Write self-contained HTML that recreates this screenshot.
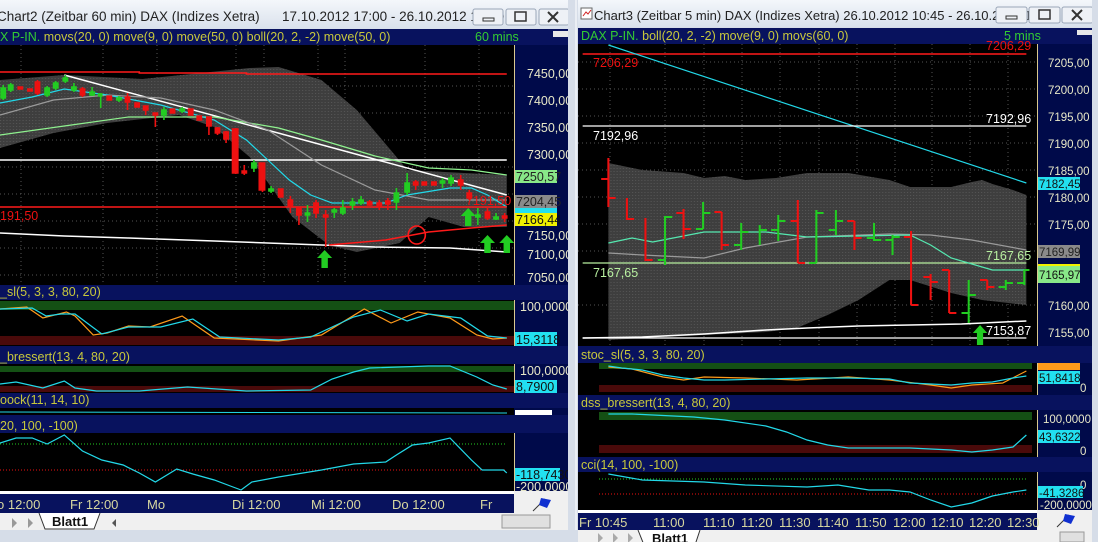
<!DOCTYPE html>
<html><head><meta charset="utf-8"><style>
html,body{margin:0;padding:0;background:#d4dbe6;}
svg{display:block;font-family:"Liberation Sans",Arial,sans-serif;}
</style></head><body>
<svg width="1098" height="542" viewBox="0 0 1098 542" xmlns="http://www.w3.org/2000/svg">
<defs>
<linearGradient id="tb" x1="0" y1="0" x2="0" y2="1"><stop offset="0" stop-color="#f4f7fb"/><stop offset="1" stop-color="#d9e1ec"/></linearGradient>
<pattern id="dot" width="3" height="3" patternUnits="userSpaceOnUse"><rect width="3" height="3" fill="#3e3e3e"/><rect width="1" height="1" fill="#565656"/></pattern>
</defs>
<rect width="1098" height="542" fill="#d6dde8"/>

<!-- ============ LEFT WINDOW ============ -->
<rect x="0" y="0" width="568" height="29" fill="url(#tb)"/>
<text x="-3" y="21" font-size="13.5" fill="#222">Chart2 (Zeitbar 60 min)  DAX (Indizes Xetra)</text>
<text x="282" y="21" font-size="13.5" fill="#222">17.10.2012 17:00 - 26.10.2012 12:00</text>
<g fill="#eef1f6" stroke="#9aa6b8"><rect x="473" y="9" width="30" height="16" rx="2"/><rect x="506" y="9" width="30" height="16" rx="2"/><rect x="539" y="9" width="30" height="16" rx="2"/></g>
<rect x="483" y="18" width="11" height="3" fill="none" stroke="#333"/><rect x="515" y="12" width="11" height="9" fill="none" stroke="#333" stroke-width="1.5"/>
<path d="M548 12 l10 10 M558 12 l-10 10" stroke="#333" stroke-width="2"/>

<rect x="0" y="29" width="568" height="16" fill="#08125e"/>
<text x="0" y="41" font-size="12.5"><tspan fill="#33cc33">X P-IN.</tspan><tspan fill="#c8c83c"> movs(20, 0) move(9, 0) move(50, 0) boll(20, 2, -2) move(50, 0)</tspan></text>
<text x="475" y="41" font-size="12.5" fill="#33cc33">60 mins</text>
<rect x="553" y="31" width="15" height="6" fill="#e8e8e8"/>

<rect x="0" y="45" width="514" height="240" fill="#000"/>
<rect x="514" y="45" width="54" height="240" fill="#000a4a"/>
<line x1="514.5" y1="45" x2="514.5" y2="285" stroke="#d8c890"/>
<g stroke="#555" stroke-dasharray="1,3">
<line x1="0" y1="86" x2="514" y2="86"/><line x1="0" y1="113" x2="514" y2="113"/><line x1="0" y1="140" x2="514" y2="140"/><line x1="0" y1="167" x2="514" y2="167"/><line x1="0" y1="194" x2="514" y2="194"/><line x1="0" y1="221" x2="514" y2="221"/><line x1="0" y1="248" x2="514" y2="248"/><line x1="0" y1="275" x2="514" y2="275"/>
<line x1="21" y1="45" x2="21" y2="285"/><line x1="103" y1="45" x2="103" y2="285"/><line x1="157" y1="45" x2="157" y2="285"/><line x1="236" y1="45" x2="236" y2="285"/><line x1="264" y1="45" x2="264" y2="285"/><line x1="318" y1="45" x2="318" y2="285"/><line x1="345" y1="45" x2="345" y2="285"/><line x1="425" y1="45" x2="425" y2="285"/><line x1="479" y1="45" x2="479" y2="285"/>
</g>
<g transform="scale(1.0714,1)">
<polygon fill="url(#dot)" points="0,80 60,75 133,79 233,68 260,67 300,80 333,110 367,153 380,170 433,173 473,175 473,227 433,227 400,217 373,243 333,252 307,245 273,217 253,187 233,157 200,127 167,115 100,123 50,133 0,148"/>
<polyline fill="none" stroke="#ff1a1a" stroke-width="1.5" points="0,72 130,72 130,73 230,73 230,74 473,74"/>
<line x1="0" y1="160" x2="473" y2="160" stroke="#fff" stroke-width="1.5"/>
<polyline fill="none" stroke="#fff" stroke-width="1.5" points="0,233 60,236 120,238 200,241 300,245 350,247 420,248 473,252"/>
<line x1="60" y1="75" x2="473" y2="195" stroke="#fff" stroke-width="1.5"/>
<polyline fill="none" stroke="#8ff28f" stroke-width="1.2" points="0,135 60,126 120,117 200,117 260,128 300,140 350,156 400,168 440,170 473,175"/>
<polyline fill="none" stroke="#9a9a9a" stroke-width="1.2" points="0,115 50,100 100,95 150,98 200,110 250,130 300,165 350,190 400,200 473,200"/>
<polyline fill="none" stroke="#22d8e8" stroke-width="1.2" points="0,103 30,97 60,89 100,95 150,105 200,120 230,140 250,160 270,180 290,195 310,203 360,203 380,195 420,188 440,188 455,195 473,207"/>
<line x1="0" y1="207" x2="473" y2="207" stroke="#ff1a1a" stroke-width="1.5"/>
<polyline fill="none" stroke="#ff1a1a" stroke-width="1.5" points="307,245 360,240 400,232 440,228 473,225"/>
<ellipse cx="389" cy="235" rx="8" ry="9" fill="none" stroke="#ff1a1a" stroke-width="1.5"/>
<g stroke-width="1.5">
<g stroke="#22cc22" fill="#22cc22">
<line x1="3" y1="85" x2="3" y2="100"/><rect x="1" y="88" width="4" height="10"/>
<line x1="10" y1="83" x2="10" y2="92"/><rect x="8" y="85" width="4" height="5"/>
<line x1="44" y1="86" x2="44" y2="97"/><rect x="42" y="88" width="4" height="7"/>
<line x1="52" y1="81" x2="52" y2="90"/><rect x="50" y="83" width="4" height="5"/>
<line x1="61" y1="75" x2="61" y2="83"/><rect x="59" y="78" width="4" height="3"/>
<line x1="69" y1="83" x2="69" y2="92"/><rect x="67" y="87" width="4" height="3"/>
<line x1="86" y1="87" x2="86" y2="96"/><rect x="84" y="92" width="4" height="3"/>
<line x1="94" y1="93" x2="94" y2="108"/><rect x="92" y="94" width="3" height="2"/>
<line x1="111" y1="96" x2="111" y2="102"/><rect x="109" y="98" width="4" height="2"/>
<line x1="153" y1="107" x2="153" y2="120"/><rect x="151" y="110" width="4" height="5"/>
<line x1="170" y1="107" x2="170" y2="113"/><rect x="168" y="109" width="4" height="2"/>
<line x1="237" y1="160" x2="237" y2="172"/><rect x="235" y="163" width="4" height="5"/>
<line x1="253" y1="186" x2="253" y2="193"/><rect x="251" y="189" width="4" height="2"/>
<line x1="287" y1="205" x2="287" y2="222"/><rect x="285" y="213" width="4" height="2"/>
<line x1="312" y1="208" x2="312" y2="218"/><rect x="310" y="210" width="4" height="2"/>
<line x1="320" y1="200" x2="320" y2="215"/><rect x="318" y="208" width="4" height="5"/>
<line x1="329" y1="198" x2="329" y2="210"/><rect x="327" y="202" width="4" height="3"/>
<line x1="337" y1="196" x2="337" y2="205"/><rect x="335" y="200" width="4" height="3"/>
<line x1="370" y1="188" x2="370" y2="210"/><rect x="368" y="193" width="4" height="9"/>
<line x1="380" y1="173" x2="380" y2="195"/><rect x="378" y="183" width="4" height="9"/>
<line x1="413" y1="178" x2="413" y2="188"/><rect x="411" y="181" width="4" height="2"/>
<line x1="421" y1="175" x2="421" y2="186"/><rect x="419" y="178" width="4" height="5"/>
<line x1="446" y1="208" x2="446" y2="225"/><rect x="444" y="215" width="4" height="2"/>
<line x1="463" y1="213" x2="463" y2="220"/><rect x="461" y="217" width="4" height="2"/>
</g>
<g stroke="#ee1111" fill="#ee1111">
<rect x="17" y="87" width="4" height="2"/><rect x="26" y="89" width="4" height="2"/>
<line x1="35" y1="80" x2="35" y2="95"/><rect x="33" y="82" width="4" height="11"/>
<line x1="77" y1="87" x2="77" y2="97"/><rect x="75" y="89" width="4" height="6"/>
<rect x="100" y="96" width="4" height="4"/>
<line x1="119" y1="93" x2="119" y2="110"/><rect x="117" y="97" width="4" height="5"/>
<rect x="126" y="103" width="4" height="4"/>
<line x1="136" y1="106" x2="136" y2="115"/><rect x="134" y="106" width="4" height="4"/>
<line x1="145" y1="113" x2="145" y2="127"/><rect x="143" y="113" width="4" height="2"/>
<rect x="159" y="109" width="4" height="4"/>
<rect x="176" y="109" width="4" height="6"/>
<rect x="184" y="116" width="4" height="4"/>
<line x1="195" y1="117" x2="195" y2="135"/><rect x="193" y="117" width="4" height="9"/>
<line x1="203" y1="127" x2="203" y2="135"/><rect x="201" y="128" width="4" height="5"/>
<line x1="211" y1="131" x2="211" y2="143"/><rect x="209" y="132" width="4" height="7"/>
<line x1="220" y1="128" x2="220" y2="174"/><rect x="217" y="129" width="5" height="44"/>
<line x1="228" y1="165" x2="228" y2="175"/><rect x="226" y="171" width="4" height="2"/>
<line x1="245" y1="163" x2="245" y2="192"/><rect x="242" y="163" width="5" height="27"/>
<rect x="260" y="189" width="4" height="8"/>
<line x1="271" y1="196" x2="271" y2="213"/><rect x="269" y="200" width="4" height="6"/>
<line x1="279" y1="208" x2="279" y2="225"/><rect x="277" y="208" width="4" height="7"/>
<line x1="295" y1="200" x2="295" y2="218"/><rect x="293" y="203" width="4" height="10"/>
<line x1="304" y1="210" x2="304" y2="247"/><rect x="302" y="215" width="4" height="2"/>
<line x1="345" y1="200" x2="345" y2="206"/><rect x="343" y="202" width="4" height="3"/>
<line x1="354" y1="200" x2="354" y2="210"/><rect x="352" y="203" width="4" height="3"/>
<line x1="362" y1="198" x2="362" y2="210"/><rect x="360" y="201" width="4" height="3"/>
<line x1="388" y1="180" x2="388" y2="190"/><rect x="386" y="182" width="4" height="3"/>
<rect x="394" y="182" width="4" height="3"/><rect x="403" y="182" width="4" height="3"/>
<line x1="430" y1="175" x2="430" y2="190"/><rect x="428" y="180" width="4" height="5"/>
<line x1="438" y1="190" x2="438" y2="200"/><rect x="436" y="193" width="4" height="5"/>
<line x1="455" y1="208" x2="455" y2="220"/><rect x="453" y="212" width="4" height="6"/>
<line x1="471" y1="213" x2="471" y2="222"/><rect x="469" y="216" width="4" height="2"/>
</g>
</g>
<g fill="#22cc22">
<polygon points="303,250 296,258 300,258 300,268 306,268 306,258 310,258"/>
<polygon points="437,208 430,216 434,216 434,226 440,226 440,216 444,216"/>
<polygon points="455,235 448,243 452,243 452,253 458,253 458,243 462,243"/>
<polygon points="473,235 466,243 470,243 470,253 476,253 476,243 480,243"/>
</g>
</g>
<text x="0" y="220" font-size="12.5" fill="#ee1111">191,50</text>
<text x="466" y="205" font-size="12.5" fill="#ee1111">7191,50</text>
<g font-size="12.5" fill="#e8e8c8">
<text x="527" y="78">7450,00</text><text x="527" y="105">7400,00</text><text x="527" y="132">7350,00</text><text x="527" y="159">7300,00</text><text x="527" y="240">7150,00</text><text x="527" y="259">7100,00</text><text x="527" y="282">7050,00</text>
</g>
<rect x="515" y="170" width="42" height="13" fill="#88e888"/><text x="516" y="181" font-size="12.5" fill="#222">7250,57</text>
<rect x="515" y="195" width="42" height="13" fill="#8a8a8a"/><text x="516" y="206" font-size="12.5" fill="#222">7204,45</text>
<rect x="515" y="208" width="42" height="6" fill="#22e0f0"/>
<rect x="515" y="213" width="42" height="13" fill="#f0f000"/><text x="516" y="224" font-size="12.5" fill="#111">7166,44</text>

<rect x="0" y="285" width="568" height="15" fill="#08125e"/>
<text x="0" y="296" font-size="12.5" fill="#c8c83c">_sl(5, 3, 3, 80, 20)</text>
<rect x="0" y="300" width="514" height="46" fill="#000"/>
<rect x="0" y="301" width="514" height="9" fill="#145014"/>
<rect x="0" y="336" width="514" height="9" fill="#4a0a0a"/>
<rect x="514" y="300" width="54" height="46" fill="#000a4a"/><line x1="514.5" y1="300" x2="514.5" y2="346" stroke="#d8c890"/>
<g transform="scale(1.0714,1)" fill="none" stroke-width="1.2">
<polyline stroke="#ff9a1a" points="0,309 25,307 40,318 62,312 70,316 87,335 100,333 120,326 140,327 170,316 200,338 260,341 300,335 340,309 365,323 390,312 420,318 445,335 460,339 473,338"/>
<polyline stroke="#22d8e8" points="0,309 30,308 43,316 57,314 70,314 95,334 120,327 150,327 180,319 205,337 260,340 290,337 330,317 355,310 380,321 400,314 430,318 455,336 473,338"/>
</g>
<text x="520" y="311" font-size="12.5" fill="#e8e8c8">100,0000</text>
<rect x="515" y="332" width="42" height="14" fill="#22e0f0"/><text x="516" y="344" font-size="12.5" fill="#111">15,3118</text>

<rect x="0" y="346" width="568" height="18" fill="#08125e"/>
<text x="0" y="361" font-size="12.5" fill="#c8c83c">_bressert(13, 4, 80, 20)</text>
<rect x="0" y="364" width="514" height="29" fill="#000"/>
<rect x="0" y="366" width="514" height="6" fill="#145014"/>
<rect x="0" y="386" width="514" height="6" fill="#4a0a0a"/>
<rect x="514" y="364" width="54" height="29" fill="#000a4a"/><line x1="514.5" y1="364" x2="514.5" y2="393" stroke="#d8c890"/>
<polyline transform="scale(1.0714,1)" fill="none" stroke="#22d8e8" stroke-width="1.2" points="0,384 15,382 40,388 60,381 70,388 90,391 130,391 175,387 230,391 290,390 310,379 330,372 345,368 400,366 420,366 445,377 460,385 473,389"/>
<text x="520" y="375" font-size="12.5" fill="#e8e8c8">100,0000</text>
<rect x="515" y="380" width="42" height="13" fill="#22e0f0"/><text x="516" y="391" font-size="12.5" fill="#111">8,7900</text>

<rect x="0" y="393" width="568" height="15" fill="#08125e"/>
<text x="0" y="404" font-size="12.5" fill="#c8c83c">oock(11, 14, 10)</text>
<rect x="0" y="408" width="514" height="7" fill="#000"/>
<line x1="0" y1="412" x2="507" y2="413" stroke="#22d8e8"/>
<rect x="514" y="408" width="54" height="7" fill="#000a4a"/>
<rect x="515" y="410" width="37" height="5" fill="#fff"/>

<rect x="0" y="415" width="568" height="18" fill="#08125e"/>
<text x="0" y="430" font-size="12.5" fill="#c8c83c">20, 100, -100)</text>
<rect x="0" y="433" width="514" height="58" fill="#000"/>
<line x1="0" y1="444" x2="507" y2="444" stroke="#22cc22" stroke-dasharray="1,2"/>
<line x1="0" y1="470" x2="507" y2="470" stroke="#ee1111" stroke-dasharray="1,2"/>
<rect x="514" y="433" width="54" height="58" fill="#000a4a"/><line x1="514.5" y1="433" x2="514.5" y2="491" stroke="#d8c890"/>
<polyline transform="scale(1.0714,1)" fill="none" stroke="#22d8e8" stroke-width="1.2" points="0,443 15,438 30,438 44,444 60,435 77,451 95,460 115,465 130,473 145,482 165,469 180,474 200,480 215,486 225,490 235,482 260,477 300,470 330,464 360,462 370,455 385,445 400,443 420,438 440,460 450,470 470,470 473,473"/>
<rect x="515" y="468" width="45" height="13" fill="#22e0f0"/><text x="516" y="479" font-size="12.5" fill="#111">-118,7430</text>
<text x="516" y="491" font-size="12.5" fill="#e8e8c8">-200,0000</text>
<rect x="0" y="491" width="514" height="3" fill="#fff"/>
<rect x="0" y="494" width="514" height="19" fill="#08125e"/>
<rect x="514" y="491" width="54" height="22" fill="#f0f0f0"/>
<path d="M533 511 L545 499" stroke="#333"/><polygon points="541,498 551,500 547,508 539,505" fill="#1030d0"/>
<g font-size="13" fill="#d8d8a0">
<text x="-3" y="509">o 12:00</text><text x="70" y="509">Fr 12:00</text><text x="147" y="509">Mo</text><text x="232" y="509">Di 12:00</text><text x="311" y="509">Mi 12:00</text><text x="392" y="509">Do 12:00</text><text x="480" y="509">Fr</text>
</g>
<rect x="0" y="513" width="568" height="17" fill="#f0f0f0"/>
<rect x="0" y="530" width="568" height="12" fill="#d6dde8"/>
<path d="M12 518 l5 5 l-5 5z M28 518 l5 5 l-5 5z" fill="#999"/>
<path d="M39 513 L45 529 L94 529 L100 513" fill="#fff" stroke="#333"/>
<text x="52" y="526" font-size="13" font-weight="bold" fill="#111">Blatt1</text>
<path d="M116 519 l-4 4 l4 4z" fill="#555"/>
<rect x="502" y="515" width="48" height="13" fill="#e0e0e0" stroke="#999"/>

<rect x="568" y="0" width="10" height="542" fill="#d6dde8"/>
<line x1="576" y1="0" x2="576" y2="530" stroke="#fff"/>

<!-- ============ RIGHT WINDOW ============ -->
<rect x="578" y="0" width="520" height="27" fill="url(#tb)"/>
<rect x="581" y="8" width="11" height="11" fill="#fff" stroke="#666"/><path d="M583 16 l3 -4 l2 2 l3 -4" stroke="#d02020" fill="none"/>
<text x="594" y="20" font-size="13" fill="#222">Chart3 (Zeitbar 5 min)  DAX (Indizes Xetra) 26.10.2012 10:45 - 26.10.2012 12...</text>
<g fill="#eef1f6" stroke="#9aa6b8"><rect x="996" y="7" width="31" height="16" rx="2"/><rect x="1029" y="7" width="31" height="16" rx="2"/><rect x="1062" y="7" width="31" height="16" rx="2"/></g>
<rect x="1006" y="16" width="11" height="3" fill="none" stroke="#333"/><rect x="1039" y="10" width="11" height="9" fill="none" stroke="#333" stroke-width="1.5"/>
<path d="M1072 10 l10 10 M1082 10 l-10 10" stroke="#333" stroke-width="2"/>
<rect x="578" y="28" width="520" height="16" fill="#08125e"/>
<text x="581" y="40" font-size="12.5"><tspan fill="#33cc33">DAX P-IN.</tspan><tspan fill="#c8c83c"> boll(20, 2, -2) move(9, 0) movs(60, 0)</tspan></text>
<text x="1004" y="40" font-size="12.5" fill="#33cc33">5 mins</text>
<rect x="1077" y="30" width="15" height="5" fill="#e8e8e8"/>

<rect x="578" y="44" width="459" height="302" fill="#000"/>
<rect x="1037" y="44" width="55" height="302" fill="#000a4a"/>
<line x1="1037.5" y1="44" x2="1037.5" y2="346" stroke="#d8c890"/>
<rect x="1092" y="0" width="6" height="542" fill="#d6dde8"/>
<g stroke="#555" stroke-dasharray="1,3">
<line x1="578" y1="62" x2="1037" y2="62"/><line x1="578" y1="89" x2="1037" y2="89"/><line x1="578" y1="116" x2="1037" y2="116"/><line x1="578" y1="143" x2="1037" y2="143"/><line x1="578" y1="170" x2="1037" y2="170"/><line x1="578" y1="197" x2="1037" y2="197"/><line x1="578" y1="224" x2="1037" y2="224"/><line x1="578" y1="251" x2="1037" y2="251"/><line x1="578" y1="305" x2="1037" y2="305"/>
<line x1="610" y1="44" x2="610" y2="346"/><line x1="665" y1="44" x2="665" y2="346"/><line x1="704" y1="44" x2="704" y2="346"/><line x1="742" y1="44" x2="742" y2="346"/><line x1="780" y1="44" x2="780" y2="346"/><line x1="819" y1="44" x2="819" y2="346"/><line x1="857" y1="44" x2="857" y2="346"/><line x1="895" y1="44" x2="895" y2="346"/><line x1="932" y1="44" x2="932" y2="346"/><line x1="970" y1="44" x2="970" y2="346"/><line x1="1008" y1="44" x2="1008" y2="346"/>
</g>
<g transform="translate(560,0) scale(1.0295,1) translate(-560,0)">
<polygon fill="url(#dot)" points="607,163 640,170 680,173 700,178 720,176 740,180 770,178 800,173 840,173 880,180 900,187 940,187 960,182 970,180 980,184 1000,190 1013,195 1013,305 970,300 940,293 900,280 880,280 850,300 820,315 790,328 760,332 700,335 607,340"/>
<line x1="582" y1="54" x2="1013" y2="54" stroke="#ff1a1a" stroke-width="1.5"/>
<line x1="607" y1="45" x2="1013" y2="183" stroke="#22d8e8" stroke-width="1.2"/>
<line x1="582" y1="126" x2="1013" y2="126" stroke="#fff" stroke-width="1.2"/>
<line x1="582" y1="263" x2="1013" y2="263" stroke="#b8f0a0" stroke-width="1.2"/>
<polyline fill="none" stroke="#9a9a9a" stroke-width="1.2" points="607,253 640,255 700,258 740,248 800,237 880,234 920,235 960,240 1013,250"/>
<polyline fill="none" stroke="#55e8b0" stroke-width="1.2" points="607,243 630,238 650,242 700,232 760,232 800,237 900,235 920,245 940,258 980,270 1013,270"/>
<polyline fill="none" stroke="#fff" stroke-width="1.5" points="582,338 640,337 700,334 760,330 800,328 850,326 900,325 950,324 1013,321"/>
<line x1="582" y1="338" x2="1013" y2="338" stroke="#fff" stroke-width="1.2"/>
<g stroke-width="2" fill="none">
<path stroke="#ee1111" d="M607 158V207M600 179h7M607 198h7"/>
<path stroke="#ee1111" d="M625 198V220M625 219h7"/>
<path stroke="#ee1111" d="M643 218V261M643 260h7"/>
<path stroke="#22cc22" d="M662 216V265M655 260h7M662 217h7"/>
<path stroke="#ee1111" d="M680 209V239M673 213h7M680 229h7"/>
<path stroke="#22cc22" d="M699 202V229M692 229h7M699 213h7"/>
<path stroke="#ee1111" d="M717 212V250M710 212h7M717 245h7"/>
<path stroke="#22cc22" d="M736 223V250M729 245h7M736 232h7"/>
<path stroke="#22cc22" d="M754 225V245M754 230h7"/>
<path stroke="#22cc22" d="M772 215V241M765 230h7M772 221h7"/>
<path stroke="#ee1111" d="M791 200V263M784 221h7M791 263h7"/>
<path stroke="#22cc22" d="M809 210V263M802 263h7M809 213h7"/>
<path stroke="#22cc22" d="M828 210V235M821 230h7M828 221h7"/>
<path stroke="#ee1111" d="M846 221V250M839 221h7M846 238h7"/>
<path stroke="#22cc22" d="M865 223V241M858 238h7M865 240h7"/>
<path stroke="#22cc22" d="M883 235V255M876 240h7M883 237h7"/>
<path stroke="#ee1111" d="M901 231V305M894 237h7M901 305h7"/>
<path stroke="#ee1111" d="M920 274V300M913 277h7M920 282h7"/>
<path stroke="#ee1111" d="M938 270V313M931 270h7M938 313h7"/>
<path stroke="#22cc22" d="M957 280V323M950 313h7M957 295h7"/>
<path stroke="#ee1111" d="M975 280V290M968 280h7M975 287h7"/>
<path stroke="#22cc22" d="M993 280V290M986 287h7M993 283h7"/>
<path stroke="#22cc22" d="M1011 270V285M1004 283h7M1011 270h5"/>
</g>
<polygon fill="#22cc22" points="968,325 961,333 965,333 965,345 971,345 971,333 975,333"/>
</g>
<g font-size="12.5">
<text x="593" y="67" fill="#ee1111">7206,29</text><text x="986" y="50" fill="#ee1111">7206,29</text>
<text x="593" y="140" fill="#fff">7192,96</text><text x="986" y="123" fill="#fff">7192,96</text>
<text x="593" y="277" fill="#b8f0a0">7167,65</text><text x="986" y="260" fill="#b8f0a0">7167,65</text>
<text x="986" y="335" fill="#fff">7153,87</text>
</g>
<g font-size="11.5" fill="#e8e8c8">
<text x="1048" y="67">7205,00</text><text x="1048" y="94">7200,00</text><text x="1048" y="121">7195,00</text><text x="1048" y="148">7190,00</text><text x="1048" y="175">7185,00</text><text x="1048" y="202">7180,00</text><text x="1048" y="229">7175,00</text><text x="1048" y="310">7160,00</text><text x="1048" y="337">7155,00</text>
</g>
<rect x="1038" y="177" width="42" height="13" fill="#22e0f0"/><text x="1039" y="188" font-size="11.5" fill="#111">7182,45</text>
<rect x="1038" y="245" width="42" height="13" fill="#8a8a8a"/><text x="1039" y="256" font-size="11.5" fill="#222">7169,99</text>
<rect x="1038" y="264" width="42" height="2" fill="#f0f000"/>
<rect x="1038" y="266" width="42" height="17" fill="#88e888"/><text x="1039" y="279" font-size="11.5" fill="#111">7165,97</text>

<rect x="578" y="346" width="514" height="17" fill="#08125e"/>
<text x="581" y="359" font-size="12.5" fill="#c8c83c">stoc_sl(5, 3, 3, 80, 20)</text>
<rect x="578" y="363" width="459" height="32" fill="#000"/>
<rect x="599" y="363" width="433" height="6" fill="#145014"/>
<rect x="599" y="385" width="433" height="7" fill="#4a0a0a"/>
<rect x="1037" y="363" width="55" height="32" fill="#000a4a"/><line x1="1037.5" y1="363" x2="1037.5" y2="395" stroke="#d8c890"/>
<g transform="translate(560,0) scale(1.0295,1) translate(-560,0)" fill="none" stroke-width="1.2">
<polyline stroke="#ff9a1a" points="607,367 630,369 660,377 680,380 700,377 740,378 790,380 840,377 880,380 920,385 940,388 960,385 990,383 1013,371"/>
<polyline stroke="#22d8e8" points="607,366 620,368 640,370 660,375 680,378 700,380 720,380 760,379 800,378 840,378 880,379 900,383 940,385 960,383 980,382 1000,378 1013,376"/>
</g>
<rect x="1038" y="363" width="42" height="7" fill="#ff9a1a"/>
<rect x="1038" y="371" width="42" height="13" fill="#22e0f0"/><text x="1039" y="382" font-size="11.5" fill="#111">51,8418</text>
<text x="1080" y="392" font-size="11.5" fill="#e8e8c8">0</text>

<rect x="578" y="395" width="514" height="15" fill="#08125e"/>
<text x="581" y="407" font-size="12.5" fill="#c8c83c">dss_bressert(13, 4, 80, 20)</text>
<rect x="578" y="410" width="459" height="47" fill="#000"/>
<rect x="599" y="412" width="433" height="8" fill="#145014"/>
<rect x="599" y="445" width="433" height="8" fill="#4a0a0a"/>
<rect x="1037" y="410" width="55" height="47" fill="#000a4a"/><line x1="1037.5" y1="410" x2="1037.5" y2="457" stroke="#d8c890"/>
<polyline transform="translate(560,0) scale(1.0295,1) translate(-560,0)" fill="none" stroke="#22d8e8" stroke-width="1.2" points="607,414 630,414 690,417 720,420 760,426 780,432 800,440 820,445 840,448 900,448 940,450 960,452 980,450 1000,447 1013,435"/>
<text x="1043" y="423" font-size="11.5" fill="#e8e8c8">100,0000</text>
<rect x="1038" y="430" width="42" height="13" fill="#22e0f0"/><text x="1039" y="441" font-size="11.5" fill="#111">43,6322</text>
<text x="1080" y="455" font-size="11.5" fill="#e8e8c8">0</text>

<rect x="578" y="457" width="514" height="15" fill="#08125e"/>
<text x="581" y="469" font-size="12.5" fill="#c8c83c">cci(14, 100, -100)</text>
<rect x="578" y="472" width="459" height="38" fill="#000"/>
<line x1="599" y1="479" x2="1027" y2="479" stroke="#22cc22" stroke-dasharray="1,2"/>
<line x1="599" y1="494" x2="1027" y2="494" stroke="#ee1111" stroke-dasharray="1,2"/>
<rect x="1037" y="472" width="55" height="38" fill="#000a4a"/><line x1="1037.5" y1="472" x2="1037.5" y2="510" stroke="#d8c890"/>
<polyline transform="translate(560,0) scale(1.0295,1) translate(-560,0)" fill="none" stroke="#22d8e8" stroke-width="1.2" points="607,474 640,480 700,482 740,485 800,487 830,485 860,490 880,490 900,492 920,500 940,507 960,503 980,496 1000,492 1013,490"/>
<text x="1080" y="489" font-size="11.5" fill="#e8e8c8">0</text>
<rect x="1038" y="486" width="45" height="12" fill="#22e0f0"/><text x="1039" y="497" font-size="11.5" fill="#111">-41,3286</text>
<text x="1040" y="509" font-size="11.5" fill="#e8e8c8">-200,0000</text>
<rect x="578" y="510" width="459" height="3" fill="#fff"/>
<rect x="578" y="513" width="459" height="17" fill="#08125e"/>
<rect x="1037" y="510" width="55" height="20" fill="#f0f0f0"/>
<path d="M1057 527 L1069 515" stroke="#333"/><polygon points="1065,514 1075,516 1071,524 1063,521" fill="#1030d0"/>
<g font-size="13" fill="#d8d8a0">
<text x="579" y="527">Fr 10:45</text><text x="653" y="527">11:00</text><text x="703" y="527">11:10</text><text x="741" y="527">11:20</text><text x="779" y="527">11:30</text><text x="817" y="527">11:40</text><text x="855" y="527">11:50</text><text x="893" y="527">12:00</text><text x="931" y="527">12:10</text><text x="969" y="527">12:20</text><text x="1007" y="527">12:30</text>
</g>
<rect x="578" y="530" width="514" height="12" fill="#f0f0f0"/>
<path d="M598 533 l5 5 l-5 5z M613 533 l5 5 l-5 5z M628 533 l5 5 l-5 5z" fill="#aaa"/>
<path d="M638 530 L644 545 L695 545 L700 530" fill="#fff" stroke="#333"/>
<text x="652" y="543" font-size="13" font-weight="bold" fill="#111">Blatt1</text>
<rect x="1060" y="532" width="24" height="10" fill="#e0e0e0" stroke="#999"/>
</svg>
</body></html>
